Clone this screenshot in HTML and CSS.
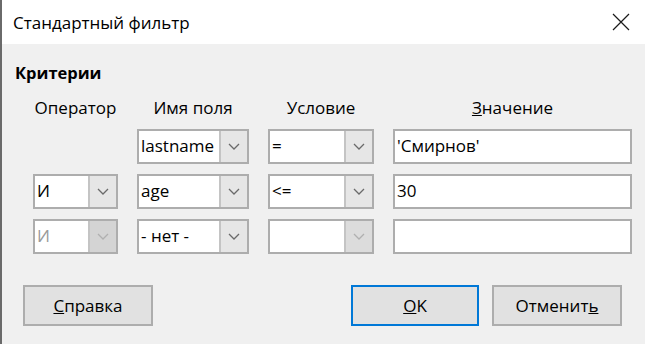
FILE: index.html
```html
<!DOCTYPE html>
<html lang="ru">
<head>
  <meta charset="UTF-8" />
  <title>Стандартный фильтр</title>
  <link rel="stylesheet" href="styles.css">
</head>
<body>
  <div class="dialog">
    <div class="titlebar">
      <span class="title">Стандартный фильтр</span>
      <svg class="close" width="18" height="18" viewBox="0 0 18 18">
        <path d="M1 1 L17 17 M17 1 L1 17" stroke="#1a1a1a" stroke-width="1.2" fill="none" />
      </svg>
    </div>

    <div class="content">
      <div class="section-title">Критерии</div>

      <div class="criteria"> <!-- encabezados y filas de condiciones -->
        <div class="head">Оператор</div>
        <div class="head">Имя поля</div>
        <div class="head">Условие</div>
        <div class="head"><u>З</u>начение</div>

        <div></div>
        <div class="combo"><span class="combo-text">lastname</span><span class="combo-btn"><svg width="12" height="7" viewBox="0 0 12 7"><path d="M1 1 L6 6 L11 1" /></svg></span></div>
        <div class="combo"><span class="combo-text">=</span><span class="combo-btn"><svg width="12" height="7" viewBox="0 0 12 7"><path d="M1 1 L6 6 L11 1" /></svg></span></div>
        <div class="field">'Смирнов'</div>

        <div class="combo"><span class="combo-text">И</span><span class="combo-btn"><svg width="12" height="7" viewBox="0 0 12 7"><path d="M1 1 L6 6 L11 1" /></svg></span></div>
        <div class="combo"><span class="combo-text">age</span><span class="combo-btn"><svg width="12" height="7" viewBox="0 0 12 7"><path d="M1 1 L6 6 L11 1" /></svg></span></div>
        <div class="combo"><span class="combo-text">&lt;=</span><span class="combo-btn"><svg width="12" height="7" viewBox="0 0 12 7"><path d="M1 1 L6 6 L11 1" /></svg></span></div>
        <div class="field">30</div>

        <div class="combo disabled"><span class="combo-text">И</span><span class="combo-btn"><svg width="12" height="7" viewBox="0 0 12 7"><path d="M1 1 L6 6 L11 1" /></svg></span></div>
        <div class="combo"><span class="combo-text">- нет -</span><span class="combo-btn"><svg width="12" height="7" viewBox="0 0 12 7"><path d="M1 1 L6 6 L11 1" /></svg></span></div>
        <div class="combo half-disabled"><span class="combo-text"></span><span class="combo-btn"><svg width="12" height="7" viewBox="0 0 12 7"><path d="M1 1 L6 6 L11 1" /></svg></span></div>
        <div class="field"></div>
      </div>

      <div class="buttons">
        <button class="btn"><u>С</u>правка</button>
        <div class="spacer"></div>
        <button class="btn default"><u>О</u>K</button>
        <button class="btn">Отменит<u>ь</u></button>
      </div>
    </div>
  </div>
</body>
</html>
```

FILE: styles.css
```css
body {
  margin: 0;
  font-family: "Open Sans", "Noto Sans", sans-serif;
  font-size: 17px;
  color: #000;
  background-color: #f0f0f0;
}

.dialog {
  width: 645px;
  height: 344px;
  box-sizing: border-box;
  border-left: 2px solid #6a6a6a;
  background-color: #f0f0f0;
  overflow: hidden;
}

.titlebar {
  height: 44px;
  background-color: #fff;
  display: flex;
  align-items: center;
  padding-left: 11px;
  padding-right: 15px;
}

.title {
  font-size: 17px;
  flex: 1;
}

.close {
  display: block;
}

.content {
  padding: 19px 0 0 13px;
}

.section-title {
  font-weight: bold;
  font-size: 16.5px;
  line-height: 20px;
}

.criteria {
  display: grid;
  grid-template-columns: 85px 112px 106px 239px;
  grid-template-rows: 22px 35px 35px 35px;
  column-gap: 19px;
  row-gap: 10px;
  margin-left: 18px;
  margin-top: 14px;
}

.head {
  text-align: center;
  line-height: 22px;
  white-space: nowrap;
}

.combo,
.field {
  display: flex;
  background-color: #fff;
  border: 2px solid #adadad;
  box-sizing: border-box;
}

.combo-text {
  flex: 1;
  padding-left: 2px;
  line-height: 30px;
  white-space: nowrap;
  overflow: hidden;
}

.combo-btn {
  width: 26px;
  background-color: #e6e6e6;
  border-left: 2px solid #c4c4c4;
  display: flex;
  align-items: center;
  justify-content: center;
}

.combo-btn path {
  stroke: #6a6a6a;
  stroke-width: 1.3;
  fill: none;
}

.field {
  padding-left: 2px;
  line-height: 30px;
}

.disabled .combo-text {
  color: #9a9a9a;
}

.disabled .combo-btn {
  background-color: #d4d4d4;
}

.disabled .combo-btn path,
.half-disabled .combo-btn path {
  stroke: #b0b0b0;
}

.half-disabled .combo-btn {
  background-color: #dcdcdc;
}

.buttons {
  display: flex;
  gap: 13px;
  margin-top: 31px;
  margin-left: 8px;
  width: 599px;
}

.spacer {
  flex: 1;
}

.btn {
  font-family: inherit;
  font-size: 17px;
  width: 130px;
  height: 41px;
  background-color: #e1e1e1;
  border: 2px solid #adadad;
  color: #000;
  padding: 0;
}

.btn.default {
  width: 128px;
  border: 2px solid #0078d7;
}
```
